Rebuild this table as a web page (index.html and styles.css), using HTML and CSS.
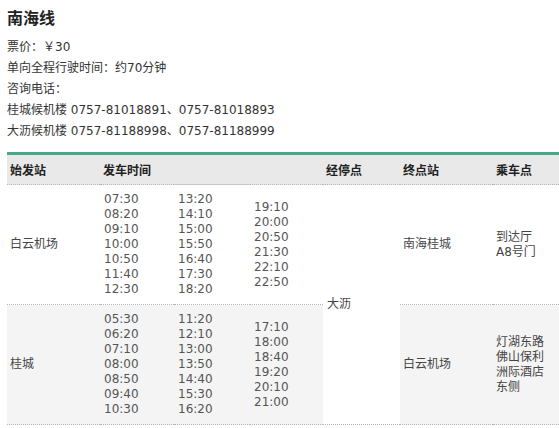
FILE: index.html
```html
<!DOCTYPE html>
<html lang="zh-CN">
<head>
<meta charset="utf-8">
<title>南海线</title>
<link rel="stylesheet" href="styles.css">
</head>
<body>
<h3 class="title">南海线</h3>
<div class="info">
  <p>票价：￥30</p>
  <p>单向全程行驶时间：约70分钟</p>
  <p>咨询电话：</p>
  <p>桂城候机楼 0757-81018891、0757-81018893</p>
  <p>大沥候机楼 0757-81188998、0757-81188999</p>
</div>
<table class="sched">
  <colgroup>
    <col class="c1"><col class="c2"><col class="c3"><col class="c4"><col class="c5"><col class="c6"><col class="c7">
  </colgroup>
  <thead>
    <tr>
      <th>始发站</th>
      <th>发车时间</th>
      <th class="solid"></th>
      <th></th>
      <th>经停点</th>
      <th>终点站</th>
      <th>乘车点</th>
    </tr>
  </thead>
  <tbody>
    <tr class="r1">
      <td>白云机场</td>
      <td class="t">07:30<br>08:20<br>09:10<br>10:00<br>10:50<br>11:40<br>12:30</td>
      <td class="t">13:20<br>14:10<br>15:00<br>15:50<br>16:40<br>17:30<br>18:20</td>
      <td class="t">19:10<br>20:00<br>20:50<br>21:30<br>22:10<br>22:50</td>
      <td class="stop" rowspan="2">大沥</td>
      <td>南海桂城</td>
      <td>到达厅<br>A8号门</td>
    </tr>
    <tr class="r2">
      <td>桂城</td>
      <td class="t">05:30<br>06:20<br>07:10<br>08:00<br>08:50<br>09:40<br>10:30</td>
      <td class="t">11:20<br>12:10<br>13:00<br>13:50<br>14:40<br>15:30<br>16:20</td>
      <td class="t">17:10<br>18:00<br>18:40<br>19:20<br>20:10<br>21:00</td>
      <td>白云机场</td>
      <td>灯湖东路<br>佛山保利<br>洲际酒店<br>东侧</td>
    </tr>
  </tbody>
</table>
</body>
</html>
```
FILE: styles.css
```css
html, body {
  margin: 0;
  padding: 0;
  background: #fff;
}
body {
  padding: 7px 0 0 7px;
  font-family: "DejaVu Sans", "Noto Sans CJK SC", sans-serif;
  font-size: 12px;
  color: #333;
}
.title {
  margin: 0 0 10px;
  font-size: 16px;
  line-height: 20px;
  font-weight: bold;
  color: #222;
  font-family: "Noto Sans CJK SC", sans-serif;
}
.info p {
  margin: 0;
  line-height: 21px;
}
.sched {
  margin-top: 10px;
  width: 552px;
  border-collapse: collapse;
  table-layout: fixed;
  border-top: 3px solid #45a98a;
}
.c1 { width: 93px; }
.c2 { width: 74px; }
.c3 { width: 76px; }
.c4 { width: 73px; }
.c5 { width: 77px; }
.c6 { width: 93px; }
.c7 { width: 66px; }
.sched th {
  background: #e9e9e9;
  height: 29px;
  padding: 0 3px;
  text-align: left;
  font-weight: bold;
  color: #222;
  font-family: "Noto Sans CJK SC", sans-serif;
  border-bottom: 1px dotted #b5b5b5;
}
.sched th.solid {
  border-bottom: 1px solid #c8c8c8;
}
.sched td {
  padding: 7px 3px;
  line-height: 15px;
  vertical-align: middle;
  border-bottom: 1px dotted #b5b5b5;
  color: #444;
}
.sched td.t {
  color: #555;
  padding-left: 4px;
}
.r1 td { background: #fff; }
.r2 td { background: #f4f4f4; }
.sched td.stop {
  background: #fff;
  padding-left: 4px;
}
```
